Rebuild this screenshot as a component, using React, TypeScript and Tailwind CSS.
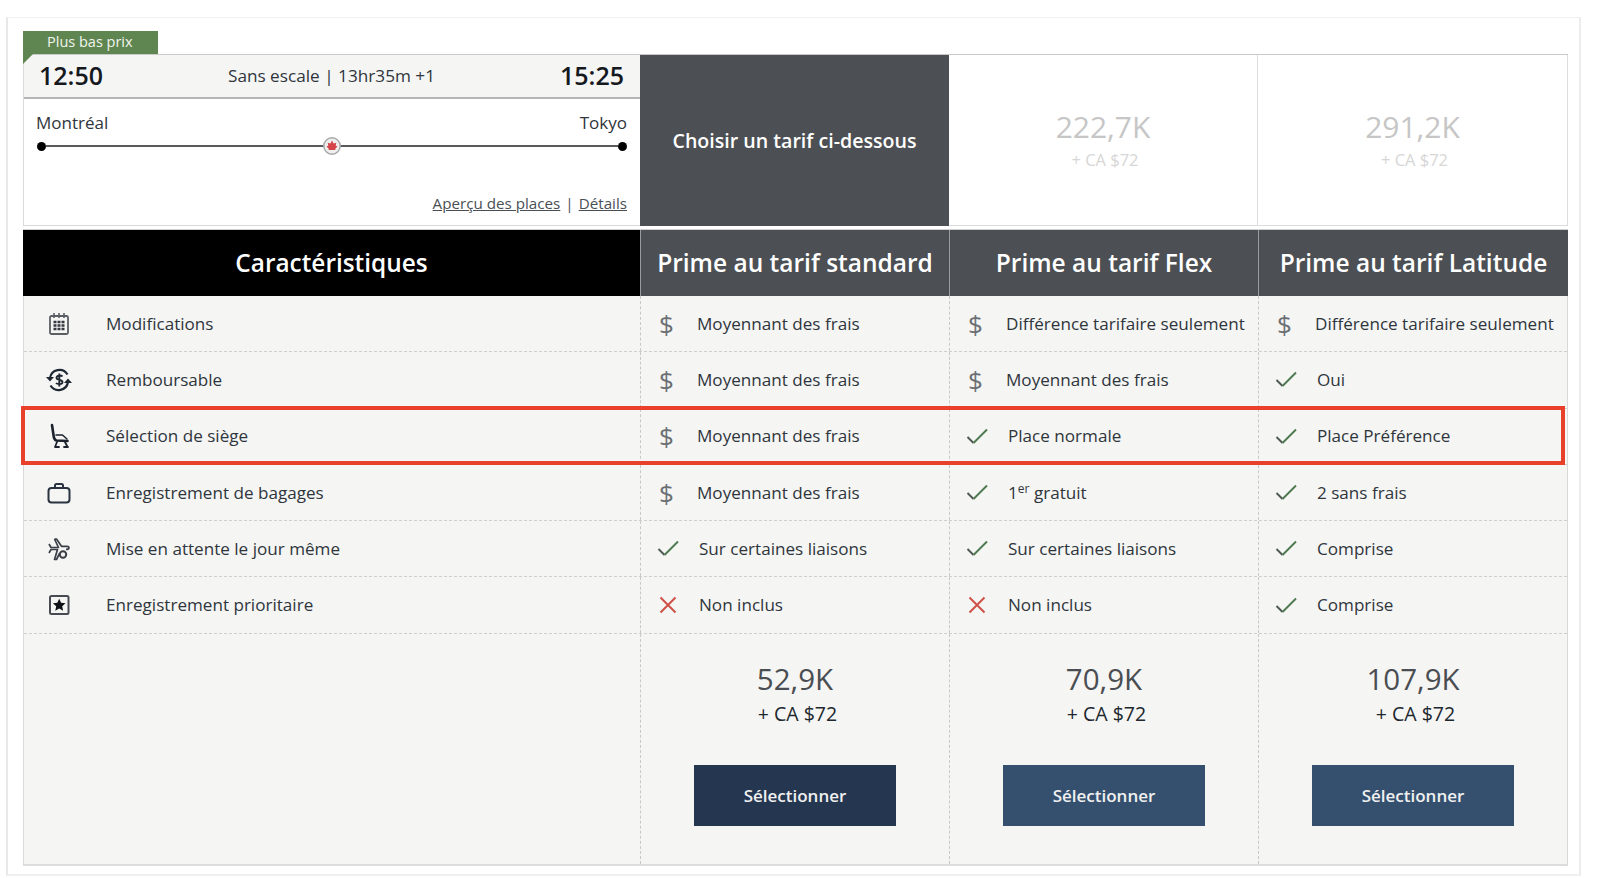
import React from 'react';

type Mark = 'fee' | 'ok' | 'no';

interface Cell {
  mark: Mark;
  label: React.ReactNode;
}

interface Row {
  icon: React.ReactNode;
  label: string;
  cells: Cell[];
  highlight?: boolean;
}

const CalendarIcon = () => (
  <svg width="24" height="26" viewBox="0 0 24 26" fill="none" stroke="#5b5f64" strokeWidth="1.8">
    <rect x="3" y="5" width="18" height="18" rx="1.5" />
    <path d="M7 2v5M12 2v5M17 2v5" strokeWidth="1.6" />
    <path d="M6.500 11h3M10.500 11h3M14.500 11h3M6.500 14.500h3M10.500 14.500h3M14.500 14.500h3M6.500 18h3M10.500 18h3M14.500 18h3" stroke="#33383e" strokeWidth="2.400" />
  </svg>
);

const RefundIcon = () => (
  <svg width="28" height="28" viewBox="0 0 28 28" fill="none" stroke="#1f2733" strokeWidth="2.200">
    <path d="M5 12a9.500 9.500 0 0 1 17.500-3.500" />
    <path d="M23 16a9.500 9.500 0 0 1-17.500 3.500" />
    <path d="M1 11l4 4.500 4-4.500z" fill="#1f2733" strokeWidth="0" />
    <path d="M27 17l-4-4.500-4 4.500z" fill="#1f2733" strokeWidth="0" />
    <path d="M17.500 10.500c-1-1.300-6-1.500-6 1.300 0 2.900 6.200 1.500 6 4.400-.2 2.500-5.200 2.300-6.500.8M14.300 7.500v13" strokeWidth="1.900" />
  </svg>
);

const SeatIcon = () => (
  <svg width="24" height="28" viewBox="0 0 24 28" fill="none" stroke="#1b222c" strokeLinecap="round" strokeLinejoin="round">
    <path d="M5 3l1.500 10c.3 3 1 5 3 5.500l11 .5" strokeWidth="2.600" />
    <path d="M9 13h6.500l4.500 4" strokeWidth="1.500" />
    <path d="M10 20l-2 5M8 25h4M18 20l2.500 5M17 25h4" strokeWidth="1.800" />
  </svg>
);

const BagIcon = () => (
  <svg width="24" height="22" viewBox="0 0 24 22" fill="none" stroke="#2a3340" strokeWidth="2">
    <rect x="1.500" y="6" width="21" height="14.500" rx="3" />
    <path d="M8 6V3.500c0-.8.5-1.500 1.500-1.500h5c1 0 1.500.7 1.500 1.500V6" />
  </svg>
);

const StandbyIcon = () => (
  <svg width="26" height="26" viewBox="0 0 26 26" fill="none" stroke="#3a3f46" strokeWidth="1.700" strokeLinejoin="round">
    <path d="M8.500 3l2 .1 5 7.200H21c2.500 0 2.600 2.800 0 3h-1" />
    <path d="M3 8l2 3.500h7.500L8.500 3" />
    <path d="M3 17l2-3.500h6.500L8.500 23.500h2l3-6" />
    <circle cx="17" cy="18.500" r="3.200" strokeWidth="2" />
  </svg>
);

const PriorityIcon = () => (
  <svg width="24" height="24" viewBox="0 0 24 24">
    <rect x="3" y="3" width="18.500" height="18" rx="1.500" fill="none" stroke="#484c52" strokeWidth="2" />
    <path d="M12.200 5.800l1.900 4 4.400.5-3.300 3 .9 4.400-3.900-2.200-3.900 2.200.9-4.400-3.300-3 4.400-.5z" fill="#0e1116" />
  </svg>
);

const fee = (label: React.ReactNode): Cell => ({ mark: 'fee', label });
const ok = (label: React.ReactNode): Cell => ({ mark: 'ok', label });
const no = (label: React.ReactNode): Cell => ({ mark: 'no', label });

const ROWS: Row[] = [
  {
    icon: <CalendarIcon />,
    label: 'Modifications',
    cells: [fee('Moyennant des frais'), fee('Différence tarifaire seulement'), fee('Différence tarifaire seulement')],
  },
  {
    icon: <RefundIcon />,
    label: 'Remboursable',
    cells: [fee('Moyennant des frais'), fee('Moyennant des frais'), ok('Oui')],
  },
  {
    icon: <SeatIcon />,
    label: 'Sélection de siège',
    cells: [fee('Moyennant des frais'), ok('Place normale'), ok('Place Préférence')],
    highlight: true,
  },
  {
    icon: <BagIcon />,
    label: 'Enregistrement de bagages',
    cells: [
      fee('Moyennant des frais'),
      ok(<>1<sup className="text-[12px]">er</sup> gratuit</>),
      ok('2 sans frais'),
    ],
  },
  {
    icon: <StandbyIcon />,
    label: 'Mise en attente le jour même',
    cells: [ok('Sur certaines liaisons'), ok('Sur certaines liaisons'), ok('Comprise')],
  },
  {
    icon: <PriorityIcon />,
    label: 'Enregistrement prioritaire',
    cells: [no('Non inclus'), no('Non inclus'), ok('Comprise')],
  },
];

const FARES = [
  { name: 'Prime au tarif standard', points: '52,9K', button: 'bg-[#253750]' },
  { name: 'Prime au tarif Flex', points: '70,9K', button: 'bg-[#35506f]' },
  { name: 'Prime au tarif Latitude', points: '107,9K', button: 'bg-[#35506f]' },
];

const MarkIcon = ({ mark }: { mark: Mark }) => {
  if (mark === 'fee') return <span className="ml-[5px] text-[26px] leading-[26px] text-[#6b6f73]">$</span>;
  if (mark === 'ok') {
    return (
      <svg className="ml-[3px]" width="22" height="17" viewBox="0 0 22 17" fill="none" strokeWidth="2">
        <path d="M1.500 9l6 6" stroke="#4f5a52" />
        <path d="M7.500 15L21 1.500" stroke="#4f7a50" />
      </svg>
    );
  }
  return (
    <svg className="ml-[5px]" width="18" height="18" viewBox="0 0 18 18" fill="none" stroke="#cf5248" strokeWidth="2">
      <path d="M1.500 1.500l15 15M16.500 1.500l-15 15" />
    </svg>
  );
};

export default function App() {
  return (
    <div className="h-[878px] w-[1600px] overflow-hidden bg-white pt-[17px] pl-[6px] pr-[19px] text-[#2f353c] font-['Open_Sans',sans-serif]">
      <div className="h-[859px] border-t border-t-[#f0f0f0] border-l-2 border-l-[#e8e8e8] border-r-2 border-r-[#ececec] border-b-2 border-b-[#f0f0f0] pt-[13px] pl-[15px]">
        {/* Onglet */}
        <div className="relative h-[23px] w-[135px] bg-[#5f8551] pl-[24px] text-[14.500px] leading-[21px] text-[#f2f5ee]">
          Plus bas prix
          <svg className="absolute left-0 top-[23px] z-10" width="10" height="10" viewBox="0 0 10 10">
            <path d="M0 0h10L0 10z" fill="#5f8551" />
          </svg>
        </div>

        <div className="w-[1545px]">
          {/* Vol et tarifs */}
          <div className="grid h-[172px] grid-cols-[617px_309px_309px_310px] border-t border-[#c9c9c9]">
            <div className="flex flex-col border-l border-b border-[#d9d9d9]">
              <div className="flex h-[44px] items-center justify-between border-b-2 border-[#b5b5b5] bg-[#f5f5f4] pl-[15px] pr-[16px]">
                <span className="text-[25px] font-semibold text-[#15191e]">12:50</span>
                <span className="text-[17.200px]">Sans escale | 13hr35m +1</span>
                <span className="text-[25px] font-semibold text-[#15191e]">15:25</span>
              </div>
              <div className="flex flex-1 flex-col pl-[12px] pr-[13px] pt-[12px]">
                <div className="flex justify-between text-[17px] leading-[24px]">
                  <span>Montréal</span>
                  <span>Tokyo</span>
                </div>
                <div className="relative mt-[2px] flex h-[18px] items-center pl-[1px]">
                  <span className="h-[9px] w-[9px] rounded-full bg-black" />
                  <span className="h-[2px] flex-1 bg-[#5a5a5a]" />
                  <span className="h-[9px] w-[9px] rounded-full bg-black" />
                  <svg className="absolute left-[287px] top-0" width="18" height="18" viewBox="0 0 18 18">
                    <circle cx="9" cy="9" r="8.200" fill="#efefef" stroke="#a8a8a8" strokeWidth="1.500" />
                    <path d="M9 3.500l1.500 3 2.800-.7-.6 3 1.800.8-2 2-.3 1.400H5.800l-.3-1.400-2-2 1.800-.8-.6-3 2.800.7z" fill="#d6454a" />
                  </svg>
                </div>
                <div className="mt-auto mb-[11px] flex justify-end gap-[5px] text-[15.200px] leading-[22px] font-medium text-[#4a4f55]">
                  <span className="underline">Aperçu des places</span>
                  <span className="font-normal">|</span>
                  <span className="underline">Détails</span>
                </div>
              </div>
            </div>

            <div className="flex items-center justify-center bg-[#4c4f53] text-[19.600px] font-semibold text-white">
              Choisir un tarif ci-dessous
            </div>

            {['222,7K', '291,2K'].map((points) => (
              <div key={points} className="flex flex-col items-center border-r border-b border-[#dcdcdc] pt-[50px]">
                <span className="text-[30px] leading-[44px] text-[#c6c6c6]">{points}</span>
                <span className="pl-[4px] text-[16.500px] leading-[22px] text-[#d6d6d6]">+ CA $72</span>
              </div>
            ))}
          </div>

          {/* En-têtes */}
          <div className="mt-[3px] grid h-[67px] grid-cols-[617px_309px_309px_310px] border-t border-[#d0d0d0] text-white">
            <div className="flex items-center justify-center bg-black text-[24.400px] font-semibold">Caractéristiques</div>
            {FARES.map((fare) => (
              <div key={fare.name} className="flex items-center justify-center border-l border-[#9a9c9f] bg-[#4c4f53] text-[24.500px] font-semibold whitespace-nowrap">
                {fare.name}
              </div>
            ))}
          </div>

          {/* Caractéristiques */}
          <div className="border-l border-r border-[#d9d9d9] bg-[#f5f5f4]">
            {ROWS.map((row) => (
              <div key={row.label} className="relative grid h-[56.300px] grid-cols-[616px_309px_309px_309px] border-b border-dashed border-[#cfcfcf] text-[17.100px]">
                <div className="flex items-center">
                  <span className="flex w-[70px] justify-center">{row.icon}</span>
                  <span className="ml-[12px]">{row.label}</span>
                </div>
                {row.cells.map((cell, i) => (
                  <div key={i} className="flex items-center border-l border-dashed border-[#c8c8c8] pl-[13px] whitespace-nowrap">
                    <span className={cell.mark === 'fee' ? 'flex w-[43px]' : 'flex w-[45px]'}>
                      <MarkIcon mark={cell.mark} />
                    </span>
                    <span>{cell.label}</span>
                  </div>
                ))}
                {row.highlight && (
                  <div className="pointer-events-none absolute left-[-3px] right-[2px] top-[-3px] bottom-[-1px] border-[4px] border-[#e8402a]" />
                )}
              </div>
            ))}

            {/* Prix */}
            <div className="grid h-[232px] grid-cols-[616px_309px_309px_309px] border-b-2 border-[#dcdcdc]">
              <div />
              {FARES.map((fare) => (
                <div key={fare.points} className="flex flex-col items-center border-l border-dashed border-[#c8c8c8] pt-[23px]">
                  <span className="text-[29.500px] leading-[44px] text-[#4a4d52]">{fare.points}</span>
                  <span className="pl-[5px] text-[19.500px] leading-[26px] text-[#20262d]">+ CA $72</span>
                  <button className={`mt-[38px] h-[61px] w-[202px] text-[17px] font-semibold text-[#f0f0f0] ${fare.button}`}>
                    Sélectionner
                  </button>
                </div>
              ))}
            </div>
          </div>
        </div>
      </div>
    </div>
  );
}
